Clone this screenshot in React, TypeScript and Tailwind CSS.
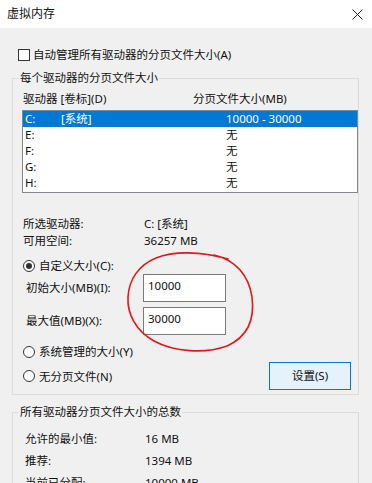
import React from 'react'

const FONT = { fontFamily: '"Segoe UI", "Noto Sans", "Noto Sans CJK SC", sans-serif' }

const drives = [
  { letter: 'C:', label: '[系统]', size: '10000 - 30000', selected: true },
  { letter: 'E:', label: '', size: '无' },
  { letter: 'F:', label: '', size: '无' },
  { letter: 'G:', label: '', size: '无' },
  { letter: 'H:', label: '', size: '无' },
]

function Radio({ checked }: { checked?: boolean }) {
  return (
    <span className="flex h-[12px] w-[12px] shrink-0 items-center justify-center rounded-full border border-[#333] bg-white">
      {checked && <span className="h-[6px] w-[6px] rounded-full bg-[#333]" />}
    </span>
  )
}

function InfoRow({ label, value, labelW, pl }: { label: string; value: string; labelW: string; pl: string }) {
  return (
    <div className={`flex ${pl}`}>
      <span className={labelW}>{label}</span>
      <span>{value}</span>
    </div>
  )
}

export default function App() {
  return (
    <div className="relative h-[483px] w-[372px] overflow-hidden bg-[#f0f0f0] text-[11.5px] text-[#111]" style={FONT}>
      {/* title bar */}
      <div className="flex h-[28px] items-center justify-between bg-white pl-[7px] pr-[9px]">
        <span className="text-[12px]">虚拟内存</span>
        <svg width="11" height="11" viewBox="0 0 11 11" className="text-[#222]">
          <path d="M0.5 0.5 L10.5 10.5 M10.5 0.5 L0.5 10.5" stroke="currentColor" strokeWidth="1" />
        </svg>
      </div>

      {/* auto manage */}
      <div className="mt-[20px] flex items-center gap-[3px] pl-[18px] leading-[14px]">
        <span className="h-[12px] w-[12px] border border-[#333] bg-white" />
        <span>自动管理所有驱动器的分页文件大小(A)</span>
      </div>

      {/* per drive group */}
      <fieldset className="ml-[12px] mt-[8px] w-[347px] border border-[#dcdcdc] pb-[4px]">
        <legend className="ml-[6px] px-[1px] leading-[16px]">每个驱动器的分页文件大小</legend>

        <div className="mt-[5px] flex pl-[10px] leading-[16px]">
          <span className="w-[170px]">驱动器 [卷标](D)</span>
          <span>分页文件大小(MB)</span>
        </div>

        <div className="ml-[9px] mt-[3px] border border-[#828790] bg-white pb-[1px]">
          {drives.map((d) => (
            <div
              key={d.letter}
              className={`flex h-[16px] items-center pl-[2px] leading-[16px] ${d.selected ? 'bg-[#0078d7] text-white' : ''}`}
            >
              <span className="w-[36px]">{d.letter}</span>
              <span className="w-[165px]">{d.label}</span>
              <span>{d.size}</span>
            </div>
          ))}
        </div>

        <div className="mt-[22px] leading-[17px]">
          <InfoRow label="所选驱动器:" value="C:  [系统]" labelW="w-[121px] whitespace-pre" pl="pl-[10px]" />
          <InfoRow label="可用空间:" value="36257 MB" labelW="w-[121px]" pl="pl-[10px]" />
        </div>

        <div className="mt-[8px] flex items-center gap-[4px] pl-[10px] leading-[17px]">
          <Radio checked />
          <span>自定义大小(C):</span>
        </div>

        <div className="flex items-center pl-[13px]">
          <span className="w-[117px]">初始大小(MB)(I):</span>
          <div className="h-[28px] w-[83px] border border-[#7a7a7a] bg-white pl-[4px] pt-[3px] leading-[16px]">10000</div>
        </div>
        <div className="mt-[5px] flex items-center pl-[13px]">
          <span className="w-[117px]">最大值(MB)(X):</span>
          <div className="h-[28px] w-[83px] border border-[#7a7a7a] bg-white pl-[4px] pt-[3px] leading-[16px]">30000</div>
        </div>

        <div className="mt-[8px] flex items-center gap-[4px] pl-[10px] leading-[17px]">
          <Radio />
          <span>系统管理的大小(Y)</span>
        </div>

        <div className="mt-[2px] flex items-center justify-between pl-[10px] pr-[7px]">
          <div className="flex items-center gap-[4px] leading-[17px]">
            <Radio />
            <span>无分页文件(N)</span>
          </div>
          <button
            type="button"
            className="h-[28px] w-[82px] border border-[#0078d7] bg-[#e5f1fb] text-center leading-[26px]"
          >
            设置(S)
          </button>
        </div>
      </fieldset>

      {/* totals group */}
      <fieldset className="ml-[12px] mt-[9px] w-[347px] border border-[#dcdcdc] pb-[10px]">
        <legend className="ml-[6px] px-[1px] leading-[16px]">所有驱动器分页文件大小的总数</legend>
        <div className="mt-[8px] leading-[22px]">
          <InfoRow label="允许的最小值:" value="16 MB" labelW="w-[120px]" pl="pl-[12px]" />
          <InfoRow label="推荐:" value="1394 MB" labelW="w-[120px]" pl="pl-[12px]" />
          <InfoRow label="当前已分配:" value="10000 MB" labelW="w-[120px]" pl="pl-[12px]" />
        </div>
      </fieldset>

      {/* hand-drawn red mark */}
      <svg className="pointer-events-none absolute left-0 top-0" width="372" height="483" viewBox="0 0 372 483">
        <path
          d="M 214 255 C 236 260, 249 276, 252 297 C 255 320, 247 337, 227 346 C 205 354, 174 352, 154 341 C 136 331, 127 314, 128 297 C 129 279, 139 265, 156 258 C 173 251, 200 251, 228 259"
          fill="none"
          stroke="#e3161b"
          strokeWidth="1.6"
          strokeLinecap="round"
        />
      </svg>
    </div>
  )
}
